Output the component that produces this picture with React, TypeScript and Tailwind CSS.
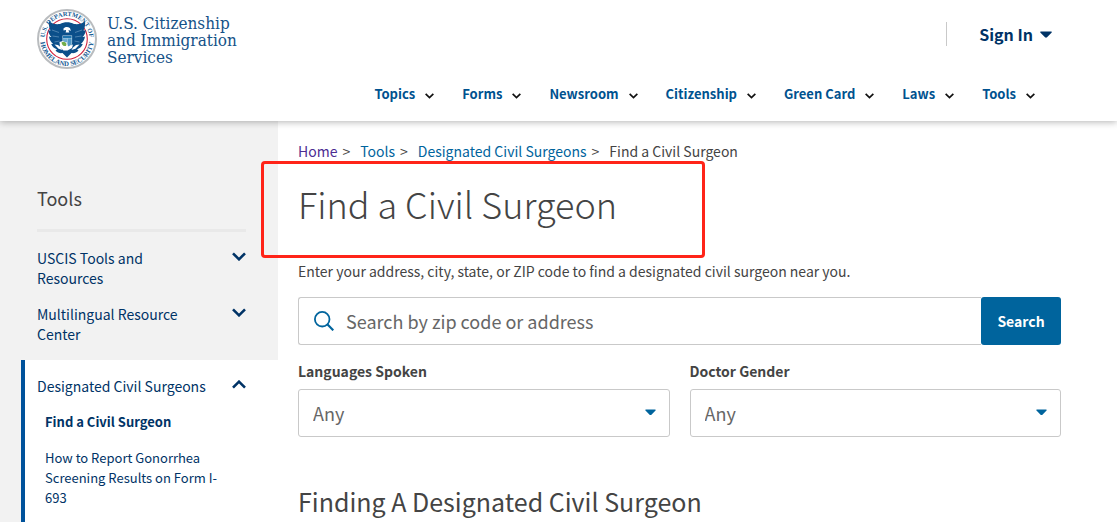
import React from 'react';

interface NavSection {
  name: string;
  href: string;
}

interface FilterSelectProps {
  id: string;
  label: string;
  options: string[];
}

const navigation: NavSection[] = [
  { name: 'Topics', href: '#topics' },
  { name: 'Forms', href: '#forms' },
  { name: 'Newsroom', href: '#newsroom' },
  { name: 'Citizenship', href: '#citizenship' },
  { name: 'Green Card', href: '#green-card' },
  { name: 'Laws', href: '#laws' },
  { name: 'Tools', href: '#tools' },
];

const Caret: React.FC<{ className: string }> = ({ className }) => (
  <svg viewBox="0 0 12 7" className={className} fill="currentColor" aria-hidden="true">
    <path d="M1 0.5h10c.8 0 1 .7.5 1.200L7 6.200c-.6.6-1.400.6-2 0L.5 1.700C0 1.200.2.5 1 .5z" />
  </svg>
);

const Chevron: React.FC<{ className: string }> = ({ className }) => (
  <svg viewBox="0 0 14 9" className={className} fill="none" stroke="currentColor" aria-hidden="true">
    <path d="M1 1.300l6 6 6-6" strokeWidth="2.600" />
  </svg>
);

const SearchIcon: React.FC<{ className: string }> = ({ className }) => (
  <svg viewBox="0 0 20 20" className={className} fill="none" stroke="currentColor" aria-hidden="true">
    <circle cx="8.200" cy="8.200" r="7.300" strokeWidth="1.800" />
    <path d="M13.300 13.300l6 6" strokeWidth="2.200" />
  </svg>
);

const Seal: React.FC = () => (
  <svg viewBox="0 0 60 60" className="size-[60px] shrink-0" aria-hidden="true">
    <defs>
      <path id="seal-top" d="M8.700 36A22.300 22.300 0 1 1 51.300 36" />
      <path id="seal-bottom" d="M3.500 27A26.700 26.700 0 1 0 56.500 27" />
    </defs>
    <circle cx="30" cy="30" r="29" fill="#fff" stroke="#b9bcbf" strokeWidth="2" />
    <circle cx="30" cy="30" r="20.300" fill="#fff" stroke="#d0213c" strokeWidth="1.100" />
    {/* wings */}
    <path
      fill="#0b4f8a"
      d="M12 12c3 3 7 3.500 11 3 2-1.300 4.500-1.800 7-1.800s5 .5 7 1.800c4 .5 8 0 11-3 .5 4-.3 7-1.500 9.500.9.100 1.600-.1 2.300-.5-.3 3-1.500 5.500-3.300 7 .9.200 1.800 0 2.500-.4-.4 3.200-2 5.700-4.200 7.200l2 .3c-1.200 3-3.300 4.700-5.800 5.200l1.500 1.200c-2 2.200-4.500 3-7 2.500L33 45.500l-3 3-3-3L25.500 44c-2.500.5-5-.3-7-2.500l1.500-1.200c-2.500-.5-4.600-2.200-5.800-5.200l2-.3c-2.200-1.500-3.800-4-4.200-7.200.7.400 1.600.6 2.500.4-1.800-1.500-3-4-3.300-7 .7.400 1.400.6 2.300.5C12.300 19 11.500 16 12 12z"
    />
    <path
      fill="none"
      stroke="#8fb4d2"
      strokeWidth="0.500"
      d="M15 21l7 2.500M15.500 27l6.500 1M17.500 33l5-1M45 21l-7 2.500M44.500 27l-6.500 1M42.500 33l-5-1"
    />
    {/* head */}
    <path fill="#fff" d="M26.500 19.500c1-1.700 4.500-2.200 6.300-.5.800.8.700 1.900.9 3-.9-.3-1.300-1-2.100-1 0 1 .3 1.700.8 2.500h-3.800c.4-.9.5-1.700.3-2.600-.9-.1-1.600.2-2.300.6 0-.7-.300-1.400-.1-2z" />
    {/* shield */}
    <path fill="#cfe3f0" d="M25.500 26.500h9.600v7c0 3-2.200 4.800-4.800 6-2.600-1.200-4.800-3-4.800-6z" />
    <path fill="#1f74ae" d="M26 27h8.600v2.200H26z" />
    <path fill="#6aaad4" d="M26 29.500h4v3.500h-4z" />
    <path fill="#4f97c6" d="M30.500 29.500h4.100v4c0 2.300-1.700 3.700-4.100 4.700z" />
    <path fill="#fff" d="M22.500 33l3.500-1 4 2.500 1 3 5-2-1 3.500-4.500 2.500h-4L23 38z" />
    <path fill="#72ad4b" d="M24.500 33.500c2-1.500 4-.5 5 1.500l-.5 2c-2 .5-4-.5-4.500-3.500z" />
    {/* olive branch and arrows */}
    <path fill="#fff" d="M17.500 35.500l3.500.5 3 2.500 1.500 2.500-4-1.200zM42.500 35.500l-3.500.5-3 2.500-1.500 2.500 4-1.200z" />
    <g fill="#155a93" fontWeight="700" className="font-['Liberation_Serif',serif]">
      <text textAnchor="middle" fontSize="6.400">
        <textPath href="#seal-top" startOffset="50%">U.S. DEPARTMENT OF</textPath>
      </text>
      <text textAnchor="middle" fontSize="6.800">
        <textPath href="#seal-bottom" startOffset="50%">HOMELAND SECURITY</textPath>
      </text>
    </g>
  </svg>
);

const FilterSelect: React.FC<FilterSelectProps> = ({ id, label, options }) => (
  <div>
    <label htmlFor={id} className="block text-[14px] leading-5 font-bold">
      {label}
    </label>
    <div className="relative mt-2">
      <select
        id={id}
        className="h-12 w-full appearance-none rounded-[3px] border border-[#c9c9c9] bg-white px-[14px] text-[18px] text-[#666]"
      >
        {options.map((option) => (
          <option key={option}>{option}</option>
        ))}
      </select>
      <Caret className="pointer-events-none absolute top-5 right-[14px] w-[11px] text-[#00649d]" />
    </div>
  </div>
);

const Header: React.FC = () => (
  <header className="relative z-10 flex justify-between bg-white pr-[65px] pl-[37px] shadow-[0_1px_7px_rgba(0,0,0,0.3)]">
    <a href="#home" className="flex items-start gap-[10px] pt-[9px] text-[#155288]">
      <Seal />
      <span className="pt-[6px] font-['DejaVu_Serif_Condensed','DejaVu_Serif',serif] text-[17px] leading-[17px]">
        U.S. Citizenship
        <br />
        and Immigration
        <br />
        Services
      </span>
    </a>
    <div className="flex flex-col items-end">
      <div className="mt-[22px] flex h-6 items-center border-l border-[#c9c9c9] pl-8">
        <button type="button" className="flex items-center gap-[7px] text-[16px] leading-6 font-bold text-[#003366]">
          Sign In
          <Caret className="w-[12px]" />
        </button>
      </div>
      <nav aria-label="Main" className="mt-[38px] mb-[17px] flex gap-7 pr-[17px]">
        {navigation.map((item) => (
          <a
            key={item.name}
            href={item.href}
            className="flex items-center gap-[10px] text-[13px] leading-5 font-bold whitespace-nowrap text-[#00528f]"
          >
            {item.name}
            <Chevron className="mt-1 w-[9px] text-[#111]" />
          </a>
        ))}
      </nav>
    </div>
  </header>
);

const Sidebar: React.FC = () => (
  <aside className="flex w-[278px] shrink-0 flex-col bg-[#f2f2f2] pt-[65px] text-[14px] leading-5 text-[#003366]">
    <div className="mr-8 ml-[37px]">
      <h2 className="border-b-[3px] border-[#e9e9e9] pb-[19px] text-[18px] leading-6 text-[#444]">Tools</h2>
      <ul className="flex flex-col gap-4 py-4">
        <li className="flex items-start justify-between">
          <a href="#resources" className="w-40">USCIS Tools and Resources</a>
          <button type="button" aria-label="Expand USCIS Tools and Resources" className="pt-1">
            <Chevron className="w-[14px]" />
          </button>
        </li>
        <li className="flex items-start justify-between">
          <a href="#multilingual" className="w-40">Multilingual Resource Center</a>
          <button type="button" aria-label="Expand Multilingual Resource Center" className="pt-1">
            <Chevron className="w-[14px]" />
          </button>
        </li>
      </ul>
    </div>
    <div className="ml-[21px] flex-1 border-l-4 border-[#00529b] bg-white pt-4 pr-8 pl-3">
      <div className="flex items-start justify-between">
        <a href="#civil-surgeons" className="whitespace-nowrap">Designated Civil Surgeons</a>
        <button type="button" aria-label="Collapse Designated Civil Surgeons" className="pt-1">
          <Chevron className="w-[14px] rotate-180" />
        </button>
      </div>
      <ul className="flex flex-col gap-4 pt-4 pr-5 pl-2 text-[13px]">
        <li>
          <a href="#find" aria-current="page" className="font-bold">Find a Civil Surgeon</a>
        </li>
        <li>
          <a href="#report">How to Report Gonorrhea Screening Results on Form I-693</a>
        </li>
      </ul>
    </div>
  </aside>
);

export default function App() {
  return (
    <div className="flex min-h-screen flex-col bg-white font-['Noto_Sans_CJK_SC',sans-serif] text-[#444]">
      <Header />
      <div className="flex flex-1">
        <Sidebar />
        <main className="min-w-0 flex-1 pt-5 pr-14 pl-5">
          <nav aria-label="Breadcrumb">
            <ol className="flex gap-[10px] text-[14px] leading-5">
              <li className="flex gap-[5px]"><a href="#home" className="text-[#4c2c92]">Home</a> &gt;</li>
              <li className="flex gap-[5px]"><a href="#tools" className="text-[#00649d]">Tools</a> &gt;</li>
              <li className="flex gap-[5px]"><a href="#civil-surgeons" className="text-[#00649d]">Designated Civil Surgeons</a> &gt;</li>
              <li aria-current="page">Find a Civil Surgeon</li>
            </ol>
          </nav>
          <div className="relative mt-5">
            <h1 className="text-[36px] leading-11 font-light">Find a Civil Surgeon</h1>
            <div className="pointer-events-none absolute -top-5 -left-[37px] h-[97px] w-[444px] rounded-sm border-[3px] border-[#ff2418]" />
          </div>
          <p className="mt-9 text-[14px] leading-5">
            Enter your address, city, state, or ZIP code to find a designated civil surgeon near you.
          </p>
          <form className="mt-4" onSubmit={(e) => e.preventDefault()}>
            <div className="flex h-12">
              <div className="flex flex-1 items-center gap-3 rounded-l-[3px] border border-r-0 border-[#c9c9c9] pl-[15px]">
                <SearchIcon className="size-5 text-[#00649d]" />
                <input
                  type="text"
                  aria-label="Search by zip code or address"
                  placeholder="Search by zip code or address"
                  className="min-w-0 flex-1 text-[18px] leading-6 outline-none placeholder:text-[#666]"
                />
              </div>
              <button type="submit" className="w-20 rounded-[3px] bg-[#00649d] text-[14px] font-bold text-white">
                Search
              </button>
            </div>
            <div className="mt-4 grid grid-cols-2 gap-5">
              <FilterSelect id="languages" label="Languages Spoken" options={['Any', 'English', 'Spanish']} />
              <FilterSelect id="gender" label="Doctor Gender" options={['Any', 'Female', 'Male']} />
            </div>
          </form>
          <h2 className="mt-12 text-[25px] leading-8">Finding A Designated Civil Surgeon</h2>
        </main>
      </div>
    </div>
  );
}
